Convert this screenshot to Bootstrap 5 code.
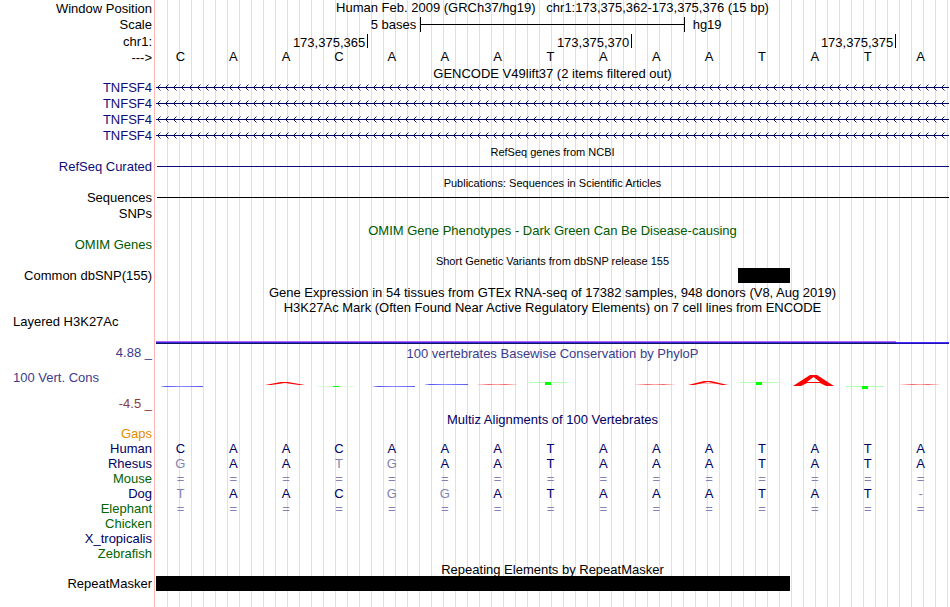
<!DOCTYPE html>
<html lang="en">
<head>
  <meta charset="UTF-8">
  <meta name="viewport" content="width=device-width, initial-scale=1.0">
  <title>hg19 chr1:173,375,362-173,375,376</title>
  <link rel="stylesheet" href="https://cdn.jsdelivr.net/npm/bootstrap@5.3.0/dist/css/bootstrap.min.css">
  <style>
    body {
      font-family: "Liberation Sans", Arial, sans-serif;
      font-size: 13px;
      line-height: 15px;
      color: #000;
      background: #fff;
    }
    /* pink divider after the labels, then a guide line every 12px */
    .browser {
      padding-right: 1px;
      background:
        linear-gradient(#ffb4b4, #ffb4b4) 154px 0 / 1px 100% no-repeat,
        repeating-linear-gradient(90deg, transparent 0 11px, #dcdcff 11px 12px) 156px 0 / 100% 100% no-repeat;
    }
    .label {
      flex: 0 0 156px;
      padding-right: 4px;
      text-align: right;
      white-space: nowrap;
    }
    .side-label {
      padding-left: 13px;
      text-align: left;
    }
    .data {
      flex: 1 1 0;
      min-width: 0;
    }
    .track-title {
      text-align: center;
      height: 15px;
      line-height: 17px;
      white-space: pre;
    }
    .position-title { line-height: 15px; }
    .ruler-label { line-height: 17px; }
    .fine { font-size: 11px; }
    .item { height: 16px; }
    .align-row { height: 15px; }
    .bases {
      display: grid;
      grid-template-columns: repeat(15, 1fr);
      text-align: center;
    }
    .bases span { padding-right: 4px; }
    .scale-grid {
      display: grid;
      grid-template-columns: repeat(3, 1fr);
      height: 17px;
      line-height: 17px;
    }
    .scale-bar {
      height: 15px;
      margin-top: 1px;
      border: solid #000;
      border-width: 0 1px;
      background: linear-gradient(#000, #000) 0 7px / 100% 1px no-repeat;
    }
    .position-grid {
      display: grid;
      grid-template-columns: 4fr 5fr 5fr 1fr;
      height: 16px;
      padding-top: 1px;
      margin-left: 1px;
    }
    .tick {
      height: 14px;
      line-height: 17px;
      padding-right: 2px;
      text-align: right;
      border-right: 1px solid #000;
    }
    .solid-line {
      height: 1px;
      margin: 7px 0 0 1px;
      background: currentColor;
    }
    .block { height: 15px; background: #000; }
    .signal {
      display: grid;
      grid-template-columns: 14fr 1fr;
      height: 3px;
      margin-top: 11px;
    }
    .signal-high { background: linear-gradient(#b264ff 0 1px, #3c28dc 1px 2px, #141464 2px); }
    .signal-low { background: linear-gradient(transparent 0 1px, #4628ff 1px 2px, #1e14b4 2px); }
    .cons-track { padding-top: 1px; }
    .cons { height: 51px; }
    .cons svg { margin-top: 12px; }
    .cons .side-label { padding-top: 10px; }
    .navy { color: #0c0c78; }
    .aligned { color: #000064; }
    .mismatch { color: #8282b4; }
    .green { color: #005a00; }
    .species { color: #006400; }
    .slate { color: #3c3c8c; }
    .maroon { color: #8c3c3c; }
    .orange { color: #e68c00; }
  </style>
</head>
<body>
  <svg width="0" height="0" class="position-absolute" aria-hidden="true">
    <defs>
      <pattern id="arrows" width="8" height="7" patternUnits="userSpaceOnUse">
        <path d="M0 3.5H8" stroke="#000064" shape-rendering="crispEdges"/>
        <path d="M4.5 0.5L1.5 3.5L4.5 6.5" fill="none" stroke="#000064" stroke-width="0.9"/>
      </pattern>
    </defs>
  </svg>

  <main class="browser min-vh-100">
    <div class="d-flex item">
      <div class="label ruler-label">Window Position</div>
      <div class="data track-title position-title">Human Feb. 2009 (GRCh37/hg19)   chr1:173,375,362-173,375,376 (15 bp)</div>
    </div>
    <div class="d-flex">
      <div class="label ruler-label">Scale</div>
      <div class="data scale-grid">
        <span class="text-end pe-1">5 bases</span>
        <span class="scale-bar"></span>
        <span class="ps-2">hg19</span>
      </div>
    </div>
    <div class="d-flex item">
      <div class="label ruler-label">chr1:</div>
      <div class="data position-grid">
        <span class="tick">173,375,365</span>
        <span class="tick">173,375,370</span>
        <span class="tick">173,375,375</span>
      </div>
    </div>
    <div class="d-flex item">
      <div class="label ruler-label">---&gt;</div>
      <div class="data bases" data-seq="CAACAAATAAATATA"></div>
    </div>

    <section>
      <div class="d-flex">
        <div class="label"></div>
        <div class="data track-title">GENCODE V49lift37 (2 items filtered out)</div>
      </div>
      <div id="genes"></div>
    </section>

    <section>
      <div class="d-flex">
        <div class="label"></div>
        <div class="data track-title fine">RefSeq genes from NCBI</div>
      </div>
      <div class="d-flex item navy">
        <div class="label">RefSeq Curated</div>
        <div class="data"><div class="solid-line"></div></div>
      </div>
    </section>

    <section>
      <div class="d-flex">
        <div class="label"></div>
        <div class="data track-title fine">Publications: Sequences in Scientific Articles</div>
      </div>
      <div class="d-flex item">
        <div class="label">Sequences</div>
        <div class="data"><div class="solid-line"></div></div>
      </div>
      <div class="d-flex item">
        <div class="label">SNPs</div>
      </div>
    </section>

    <section class="green">
      <div class="d-flex">
        <div class="label"></div>
        <div class="data track-title">OMIM Gene Phenotypes - Dark Green Can Be Disease-causing</div>
      </div>
      <div class="d-flex item">
        <div class="label">OMIM Genes</div>
      </div>
    </section>

    <section>
      <div class="d-flex">
        <div class="label"></div>
        <div class="data track-title fine">Short Genetic Variants from dbSNP release 155</div>
      </div>
      <div class="d-flex item">
        <div class="label">Common dbSNP(155)</div>
        <div class="data bases"><div class="block" style="grid-column: 12"></div></div>
      </div>
    </section>

    <section>
      <div class="d-flex">
        <div class="label"></div>
        <div class="data track-title">Gene Expression in 54 tissues from GTEx RNA-seq of 17382 samples, 948 donors (V8, Aug 2019)</div>
      </div>
      <div class="d-flex">
        <div class="label"></div>
        <div class="data track-title">H3K27Ac Mark (Often Found Near Active Regulatory Elements) on 7 cell lines from ENCODE</div>
      </div>
      <div class="d-flex">
        <div class="label side-label">Layered H3K27Ac</div>
        <div class="data pt-3"><div class="signal"><div class="signal-high"></div><div class="signal-low"></div></div></div>
      </div>
    </section>

    <section class="cons-track slate">
      <div class="d-flex">
        <div class="label">4.88 _</div>
        <div class="data track-title">100 vertebrates Basewise Conservation by PhyloP</div>
      </div>
      <div class="d-flex cons">
        <div class="label ps-0 d-flex flex-column justify-content-between">
          <div class="side-label">100 Vert. Cons</div>
          <div class="maroon">-4.5 _</div>
        </div>
        <div class="data">
          <!-- conservation logo, 15 bases across the full width -->
          <svg class="d-block" width="100%" height="20" viewBox="0 0 793 20" preserveAspectRatio="none" role="img" aria-label="PhyloP scores">
            <defs>
              <linearGradient id="blue"><stop offset="0" stop-color="#6464ff" stop-opacity=".4"/><stop offset=".12" stop-color="#5050f0"/><stop offset=".45" stop-color="#8c8cff"/><stop offset="1" stop-color="#5a5af5"/></linearGradient>
              <linearGradient id="red"><stop offset="0" stop-color="#f88" stop-opacity=".2"/><stop offset=".3" stop-color="#f06464"/><stop offset=".5" stop-color="#faa"/><stop offset=".7" stop-color="#f06464"/><stop offset="1" stop-color="#f88" stop-opacity=".2"/></linearGradient>
            </defs>
            <g fill="url(#blue)">
              <rect x="5" y="14" width="42" height="1"/>
              <rect x="217" y="14" width="42" height="1"/>
              <rect x="269" y="12" width="43" height="1"/>
            </g>
            <g fill="url(#red)">
              <rect x="321" y="12" width="40" height="1"/>
              <rect x="479" y="12" width="40" height="1"/>
              <rect x="744" y="12" width="40" height="1"/>
            </g>
            <g fill="#b4ffb4">
              <rect x="161" y="14" width="38" height="1" fill="#dcffdc"/>
              <rect x="373" y="10" width="38" height="1"/>
              <rect x="584" y="10" width="38" height="1"/>
              <rect x="690" y="14" width="38" height="1"/>
            </g>
            <g fill="#0f0">
              <rect x="177" y="14" width="6" height="1"/>
              <rect x="389" y="10" width="6" height="3"/>
              <rect x="600" y="10" width="6" height="3"/>
              <rect x="706" y="14" width="6" height="3"/>
            </g>
            <g fill="red">
              <path d="M109 13L125 10H132L149 13H143L129 11L115 13Z"/>
              <path d="M532 13L548 9H555L572 13H566L552 10L538 13Z"/>
              <path d="M543 11.5H561V12H543Z" opacity=".5"/>
              <path fill-rule="evenodd" d="M637 14L654 3H661L678 14H670L664 11H651L645 14ZM651 10H664L657.500 5Z"/>
            </g>
          </svg>
        </div>
      </div>
    </section>

    <section>
      <div class="d-flex aligned">
        <div class="label"></div>
        <div class="data track-title">Multiz Alignments of 100 Vertebrates</div>
      </div>
      <div id="alignments"></div>
    </section>

    <section>
      <div class="d-flex">
        <div class="label"></div>
        <div class="data track-title">Repeating Elements by RepeatMasker</div>
      </div>
      <div class="d-flex item">
        <div class="label">RepeatMasker</div>
        <div class="data bases"><div class="block" style="grid-column: 1 / 13"></div></div>
      </div>
    </section>
  </main>

  <script src="https://cdn.jsdelivr.net/npm/bootstrap@5.3.0/dist/js/bootstrap.bundle.min.js"></script>
  <script>
    const reference = 'CAACAAATAAATATA';
    const genes = ['TNFSF4', 'TNFSF4', 'TNFSF4', 'TNFSF4'];
    const species = [
      { name: 'Gaps', color: 'orange', seq: '' },
      { name: 'Human', color: 'aligned', seq: 'CAACAAATAAATATA' },
      { name: 'Rhesus', color: 'aligned', seq: 'GAATGAATAAATATA' },
      { name: 'Mouse', color: 'species', seq: '===============' },
      { name: 'Dog', color: 'aligned', seq: 'TAACGGATAAATAT-' },
      { name: 'Elephant', color: 'species', seq: '===============' },
      { name: 'Chicken', color: 'species', seq: '' },
      { name: 'X_tropicalis', color: 'aligned', seq: '' },
      { name: 'Zebrafish', color: 'species', seq: '' }
    ];

    document.querySelectorAll('[data-seq]').forEach(el => {
      el.innerHTML = [...el.dataset.seq].map(b => `<span>${b}</span>`).join('');
    });

    document.getElementById('genes').innerHTML = genes.map(name => `
      <div class="d-flex item navy">
        <div class="label">${name}</div>
        <div class="data pt-1"><svg class="d-block" width="100%" height="7"><rect width="100%" height="7" fill="url(#arrows)"/></svg></div>
      </div>`).join('');

    // bases that differ from the reference are drawn lighter
    document.getElementById('alignments').innerHTML = species.map(s => `
      <div class="d-flex align-row">
        <div class="label ${s.color}">${s.name}</div>
        <div class="data bases">${[...s.seq].map((b, i) =>
          `<span class="${b === reference[i] ? 'aligned' : 'mismatch'}">${b}</span>`).join('')}</div>
      </div>`).join('');
  </script>
</body>
</html>
